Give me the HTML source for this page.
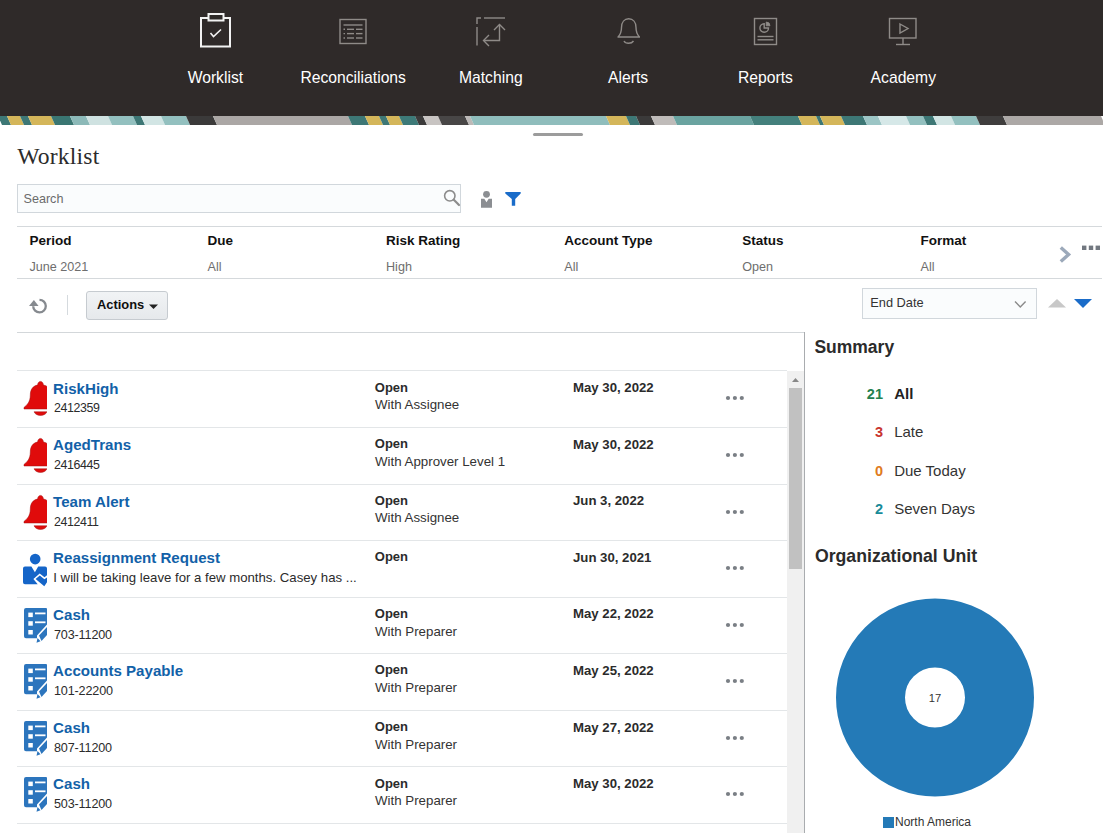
<!DOCTYPE html>
<html><head><meta charset="utf-8"><title>Worklist</title>
<style>
html,body{margin:0;padding:0;background:#ffffff;}
body{width:1110px;height:833px;position:relative;overflow:hidden;font-family:'Liberation Sans', sans-serif;}
</style></head><body>
<div style="position:absolute;left:0px;top:0px;width:1103px;height:116px;background:#2f2a29"></div><svg style="position:absolute;left:0;top:116px" width="1103" height="9" viewBox="0 116 1103 9"><polygon points="-2,116 7,116 11,125 2,125" fill="#3d7775"/><polygon points="7,116 20,116 24,125 11,125" fill="#d4b65a"/><polygon points="20,116 28,116 32,125 24,125" fill="#3d7775"/><polygon points="28,116 51,116 55,125 32,125" fill="#d4b65a"/><polygon points="51,116 70,116 74,125 55,125" fill="#3a7672"/><polygon points="70,116 86,116 90,125 74,125" fill="#8cb9b8"/><polygon points="86,116 108,116 112,125 90,125" fill="#cfe2e1"/><polygon points="108,116 133,116 137,125 112,125" fill="#93c0bf"/><polygon points="133,116 141,116 145,125 137,125" fill="#3d7775"/><polygon points="141,116 161,116 165,125 145,125" fill="#d2e5e4"/><polygon points="161,116 186,116 190,125 165,125" fill="#93c0bf"/><polygon points="186,116 213,116 217,125 190,125" fill="#3b3a3a"/><polygon points="213,116 348,116 352,125 217,125" fill="#aba7a5"/><polygon points="348,116 365,116 369,125 352,125" fill="#3d7775"/><polygon points="365,116 379,116 383,125 369,125" fill="#d4b65a"/><polygon points="379,116 386,116 390,125 383,125" fill="#3d7775"/><polygon points="386,116 399,116 403,125 390,125" fill="#d4b65a"/><polygon points="399,116 415,116 419,125 403,125" fill="#3d7a78"/><polygon points="415,116 423,116 427,125 419,125" fill="#3b3a3a"/><polygon points="423,116 438,116 442,125 427,125" fill="#c8c4c2"/><polygon points="438,116 465,116 469,125 442,125" fill="#484646"/><polygon points="465,116 470,116 474,125 469,125" fill="#bdb9b7"/><polygon points="470,116 606,116 610,125 474,125" fill="#8fbdbc"/><polygon points="606,116 626,116 630,125 610,125" fill="#d4b65a"/><polygon points="626,116 636,116 640,125 630,125" fill="#3d7775"/><polygon points="636,116 651,116 655,125 640,125" fill="#3b3a3a"/><polygon points="651,116 673,116 677,125 655,125" fill="#bfbbb9"/><polygon points="673,116 750,116 754,125 677,125" fill="#6aa3a0"/><polygon points="750,116 798,116 802,125 754,125" fill="#44807c"/><polygon points="798,116 816,116 820,125 802,125" fill="#d4b65a"/><polygon points="816,116 820,116 824,125 820,125" fill="#3d7775"/><polygon points="820,116 841,116 845,125 824,125" fill="#d4b65a"/><polygon points="841,116 863,116 867,125 845,125" fill="#3d7775"/><polygon points="863,116 878,116 882,125 867,125" fill="#9cc5c5"/><polygon points="878,116 906,116 910,125 882,125" fill="#d6e8e8"/><polygon points="906,116 923,116 927,125 910,125" fill="#93c0bf"/><polygon points="923,116 933,116 937,125 927,125" fill="#3d7775"/><polygon points="933,116 951,116 955,125 937,125" fill="#d2e5e4"/><polygon points="951,116 976,116 980,125 955,125" fill="#93c0bf"/><polygon points="976,116 1003,116 1007,125 980,125" fill="#3f3d3d"/><polygon points="1003,116 1101,116 1105,125 1007,125" fill="#aca8a6"/></svg><div style="position:absolute;left:533px;top:133px;width:50px;height:3px;background:#9c9c9c;border-radius:2px"></div>
<svg style="position:absolute;left:0;top:0" width="1103" height="116">
 <g fill="none" stroke="#f2f2f2" stroke-width="2">
  <rect x="201" y="18" width="29" height="28.5"/>
  <rect x="208.5" y="14" width="15" height="6.5" fill="#2e2a28"/>
  <polyline points="210.5,33 213.5,36.5 221,29.5" stroke-width="1.6"/>
 </g>
 <g fill="none" stroke="#8f8b88" stroke-width="1.4">
  <rect x="340" y="19.5" width="26" height="24"/>
  <line x1="343.5" y1="25" x2="362.5" y2="25"/>
  <line x1="343.5" y1="29.3" x2="345" y2="29.3"/><line x1="347" y1="29.3" x2="354" y2="29.3"/><line x1="356" y1="29.3" x2="362.5" y2="29.3"/>
  <line x1="343.5" y1="33.6" x2="345" y2="33.6"/><line x1="347" y1="33.6" x2="354" y2="33.6"/><line x1="356" y1="33.6" x2="362.5" y2="33.6"/>
  <line x1="343.5" y1="38" x2="345" y2="38"/><line x1="347" y1="38" x2="354" y2="38"/><line x1="356" y1="38" x2="362.5" y2="38"/>
 </g>
 <g fill="none" stroke="#8f8b88" stroke-width="1.4">
  <polyline points="477,24 477,18 481,18"/>
  <line x1="484" y1="18" x2="505" y2="18"/>
  <line x1="477" y1="27" x2="477" y2="45.5"/>
  <polyline points="499.5,24.5 499.5,40.5 484,40.5"/>
  <polyline points="494,30 499.5,24.5 505,30"/>
  <polyline points="489,35 483.5,40.5 489,46"/>
 </g>
 <g fill="none" stroke="#8f8b88" stroke-width="1.4">
  <path d="M617.5,37 L640,37 M618,37 C621,34 621.5,31 621.5,27.5 C621.5,22 624.5,18.8 628.7,18.8 C633,18.8 636,22 636,27.5 C636,31 636.5,34 639.5,37"/>
  <path d="M624,41 C625.5,44 631.5,44 633.5,41"/>
 </g>
 <g fill="none" stroke="#8f8b88" stroke-width="1.4">
  <rect x="754.5" y="18.5" width="22" height="26"/>
  <path d="M768.5,28 A4.3,4.3 0 1 1 764.2,23.7 L764.2,28 Z"/>
  <path d="M766.2,22 L766.2,25.8 L770,25.8 A3.8,3.8 0 0 0 766.2,22 Z" fill="#8f8b88" stroke-width="0.8"/>
  <line x1="757.5" y1="36.5" x2="773.5" y2="36.5"/>
  <line x1="757.5" y1="39.8" x2="773.5" y2="39.8"/>
 </g>
 <g fill="none" stroke="#8f8b88" stroke-width="1.4">
  <rect x="889.5" y="18.5" width="26.5" height="19.5"/>
  <line x1="903" y1="38" x2="903" y2="44"/>
  <line x1="896" y1="44.5" x2="910" y2="44.5"/>
  <polygon points="900,24 908,28.5 900,33"/>
 </g>
</svg><div style="position:absolute;left:15.40px;width:400px;text-align:center;top:70.00px;font:400 15.7px/1 'Liberation Sans', sans-serif;color:#ffffff;white-space:nowrap;">Worklist</div><div style="position:absolute;left:153.20px;width:400px;text-align:center;top:70.00px;font:400 15.7px/1 'Liberation Sans', sans-serif;color:#ffffff;white-space:nowrap;">Reconciliations</div><div style="position:absolute;left:290.80px;width:400px;text-align:center;top:70.00px;font:400 15.7px/1 'Liberation Sans', sans-serif;color:#ffffff;white-space:nowrap;">Matching</div><div style="position:absolute;left:428.10px;width:400px;text-align:center;top:70.00px;font:400 15.7px/1 'Liberation Sans', sans-serif;color:#ffffff;white-space:nowrap;">Alerts</div><div style="position:absolute;left:565.50px;width:400px;text-align:center;top:70.00px;font:400 15.7px/1 'Liberation Sans', sans-serif;color:#ffffff;white-space:nowrap;">Reports</div><div style="position:absolute;left:703.30px;width:400px;text-align:center;top:70.00px;font:400 15.7px/1 'Liberation Sans', sans-serif;color:#ffffff;white-space:nowrap;">Academy</div><div style="position:absolute;left:17.20px;top:145.00px;font:400 23.6px/1 'Liberation Serif', serif;color:#2b2b2b;white-space:nowrap;letter-spacing:0.2px">Worklist</div><div style="position:absolute;left:17px;top:184px;width:442px;height:27px;border:1px solid #d1d7dc;background:#fafcfd"></div><div style="position:absolute;left:23.50px;top:193.00px;font:400 12.6px/1 'Liberation Sans', sans-serif;color:#6b6b6b;white-space:nowrap;">Search</div><svg style="position:absolute;left:440px;top:186px" width="24" height="24">
 <circle cx="9.8" cy="9.8" r="5.2" fill="none" stroke="#8c8c8c" stroke-width="1.6"/>
 <line x1="13.8" y1="13.8" x2="19" y2="19" stroke="#8c8c8c" stroke-width="2.2" stroke-linecap="round"/>
</svg><svg style="position:absolute;left:478px;top:188px" width="50" height="24">
 <circle cx="8.5" cy="6.3" r="3.4" fill="#8b8e92"/>
 <path d="M3,10.8 L6.3,10.8 L8.5,14.3 L10.7,10.8 L14,10.8 L14,19.8 L3,19.8 Z" fill="#8b8e92"/>
 <path d="M27.3,4 L42.7,4 L42.7,5.5 L37.2,11 L37.2,17.7 L33.8,17.7 L33.8,11 L27.3,5.5 Z" fill="#1a6cc9"/>
</svg><div style="position:absolute;left:17px;top:226px;width:1085px;height:0px;border-top:1px solid #d5d9dc"></div><div style="position:absolute;left:17px;top:278px;width:1085px;height:0px;border-top:1px solid #d5d9dc"></div><div style="position:absolute;left:29.50px;top:234.00px;font:700 13.5px/1 'Liberation Sans', sans-serif;color:#111111;white-space:nowrap;">Period</div><div style="position:absolute;left:29.50px;top:261.00px;font:400 12.6px/1 'Liberation Sans', sans-serif;color:#6e6e6e;white-space:nowrap;">June 2021</div><div style="position:absolute;left:207.60px;top:234.00px;font:700 13.5px/1 'Liberation Sans', sans-serif;color:#111111;white-space:nowrap;">Due</div><div style="position:absolute;left:207.60px;top:261.00px;font:400 12.6px/1 'Liberation Sans', sans-serif;color:#6e6e6e;white-space:nowrap;">All</div><div style="position:absolute;left:386.00px;top:234.00px;font:700 13.5px/1 'Liberation Sans', sans-serif;color:#111111;white-space:nowrap;">Risk Rating</div><div style="position:absolute;left:386.00px;top:261.00px;font:400 12.6px/1 'Liberation Sans', sans-serif;color:#6e6e6e;white-space:nowrap;">High</div><div style="position:absolute;left:564.30px;top:234.00px;font:700 13.5px/1 'Liberation Sans', sans-serif;color:#111111;white-space:nowrap;">Account Type</div><div style="position:absolute;left:564.30px;top:261.00px;font:400 12.6px/1 'Liberation Sans', sans-serif;color:#6e6e6e;white-space:nowrap;">All</div><div style="position:absolute;left:742.20px;top:234.00px;font:700 13.5px/1 'Liberation Sans', sans-serif;color:#111111;white-space:nowrap;">Status</div><div style="position:absolute;left:742.20px;top:261.00px;font:400 12.6px/1 'Liberation Sans', sans-serif;color:#6e6e6e;white-space:nowrap;">Open</div><div style="position:absolute;left:920.50px;top:234.00px;font:700 13.5px/1 'Liberation Sans', sans-serif;color:#111111;white-space:nowrap;">Format</div><div style="position:absolute;left:920.50px;top:261.00px;font:400 12.6px/1 'Liberation Sans', sans-serif;color:#6e6e6e;white-space:nowrap;">All</div><svg style="position:absolute;left:1050px;top:240px" width="60" height="30">
 <polyline points="10.8,7.4 18.6,14.5 10.8,21.6" fill="none" stroke="#9ca9ba" stroke-width="3.4"/>
 <rect x="32" y="5.6" width="4.4" height="4.4" fill="#727880"/>
 <rect x="38.8" y="5.6" width="4.4" height="4.4" fill="#727880"/>
 <rect x="45.6" y="5.6" width="4.4" height="4.4" fill="#727880"/>
</svg><svg style="position:absolute;left:26px;top:295px" width="24" height="24">
 <path d="M13.5,4.8 A6.3,6.3 0 1 1 7.2,11.2" fill="none" stroke="#868a8f" stroke-width="2.3"/>
 <polygon points="7.9,5 3,10.9 12.6,10.9" fill="#868a8f"/>
</svg><div style="position:absolute;left:66.5px;top:295px;width:1px;height:20px;background:#d5dade"></div><div style="position:absolute;left:86px;top:291px;width:80px;height:27px;border:1px solid #c6cbd0;border-radius:3px;background:linear-gradient(#f1f3f5,#e6e9ec)"></div><div style="position:absolute;left:97.00px;top:299.00px;font:700 12.9px/1 'Liberation Sans', sans-serif;color:#0f0f0f;white-space:nowrap;">Actions</div><svg style="position:absolute;left:148px;top:303px" width="12" height="8"><polygon points="1,1.5 10,1.5 5.5,6" fill="#222"/></svg><div style="position:absolute;left:862px;top:288px;width:173px;height:29px;border:1px solid #d1d7dc;background:#fafcfd"></div><div style="position:absolute;left:870.30px;top:297.00px;font:400 12.8px/1 'Liberation Sans', sans-serif;color:#333333;white-space:nowrap;">End Date</div><svg style="position:absolute;left:1012px;top:298px" width="16" height="12"><polyline points="3,3.5 8.3,9 13.6,3.5" fill="none" stroke="#8a8a8a" stroke-width="1.4"/></svg><svg style="position:absolute;left:1045px;top:296px" width="50" height="14">
 <polygon points="3,11.5 12,3 21,11.5" fill="#c8c8c8"/>
 <polygon points="29,3 47,3 38,12" fill="#1a6cc9"/>
</svg><div style="position:absolute;left:17px;top:332px;width:787px;height:0px;border-top:1px solid #d3d7da"></div><div style="position:absolute;left:804px;top:332px;width:1px;height:501px;background:#a9acaf"></div><div style="position:absolute;left:787px;top:371px;width:17px;height:462px;background:#f0f0f0"></div><svg style="position:absolute;left:787px;top:371px" width="17" height="14"><polygon points="5,11 8.5,7 12,11" fill="#888"/></svg><div style="position:absolute;left:789px;top:388px;width:13px;height:181px;background:#c1c1c1"></div><div style="position:absolute;left:17px;top:370px;width:770px;height:0px;border-top:1px solid #e3e6e8"></div><div style="position:absolute;left:17px;top:427px;width:770px;height:0px;border-top:1px solid #e3e6e8"></div><div style="position:absolute;left:17px;top:484px;width:770px;height:0px;border-top:1px solid #e3e6e8"></div><div style="position:absolute;left:17px;top:540px;width:770px;height:0px;border-top:1px solid #e3e6e8"></div><div style="position:absolute;left:17px;top:597px;width:770px;height:0px;border-top:1px solid #e3e6e8"></div><div style="position:absolute;left:17px;top:653px;width:770px;height:0px;border-top:1px solid #e3e6e8"></div><div style="position:absolute;left:17px;top:710px;width:770px;height:0px;border-top:1px solid #e3e6e8"></div><div style="position:absolute;left:17px;top:766px;width:770px;height:0px;border-top:1px solid #e3e6e8"></div><div style="position:absolute;left:17px;top:823px;width:770px;height:0px;border-top:1px solid #e3e6e8"></div><svg style="position:absolute;left:18px;top:378.4px;overflow:hidden" width="29" height="40" viewBox="0 0 29 40">
 <g fill="#e00b0b" stroke="#a01010" stroke-width="0.5">
  <path d="M6,29.4 C9,27 12.3,24 12.3,17 C12.3,11 15.5,7.6 19.6,7.1 C19.6,4.9 21,3.4 22.5,3.4 C24,3.4 25.4,4.9 25.4,7.1 C29.5,7.6 32.7,11 32.7,17 C32.7,24 36,27 39,29.4 L39,31 L6,31 Z"/>
  <path d="M16,33.8 L29,33.8 C28,36.2 25.5,37.4 22.5,37.4 C19.5,37.4 17,36.2 16,33.8 Z"/>
 </g>
</svg><div style="position:absolute;left:53.10px;top:381.00px;font:700 15.1px/1 'Liberation Sans', sans-serif;color:#1261a8;white-space:nowrap;">RiskHigh</div><div style="position:absolute;left:54.00px;top:402.00px;font:400 12.4px/1 'Liberation Sans', sans-serif;color:#2b2b2b;white-space:nowrap;letter-spacing:-0.4px">2412359</div><div style="position:absolute;left:374.80px;top:381.00px;font:700 13px/1 'Liberation Sans', sans-serif;color:#2b2b2b;white-space:nowrap;">Open</div><div style="position:absolute;left:375.00px;top:398.00px;font:400 13.3px/1 'Liberation Sans', sans-serif;color:#333333;white-space:nowrap;">With Assignee</div><div style="position:absolute;left:573.00px;top:381.00px;font:700 13.2px/1 'Liberation Sans', sans-serif;color:#2b2b2b;white-space:nowrap;">May 30, 2022</div><svg style="position:absolute;left:724px;top:394.4px" width="24" height="8">
 <circle cx="4" cy="4" r="2.1" fill="#7a7f85"/><circle cx="10.9" cy="4" r="2.1" fill="#7a7f85"/><circle cx="17.8" cy="4" r="2.1" fill="#7a7f85"/>
</svg><svg style="position:absolute;left:18px;top:435.0px;overflow:hidden" width="29" height="40" viewBox="0 0 29 40">
 <g fill="#e00b0b" stroke="#a01010" stroke-width="0.5">
  <path d="M6,29.4 C9,27 12.3,24 12.3,17 C12.3,11 15.5,7.6 19.6,7.1 C19.6,4.9 21,3.4 22.5,3.4 C24,3.4 25.4,4.9 25.4,7.1 C29.5,7.6 32.7,11 32.7,17 C32.7,24 36,27 39,29.4 L39,31 L6,31 Z"/>
  <path d="M16,33.8 L29,33.8 C28,36.2 25.5,37.4 22.5,37.4 C19.5,37.4 17,36.2 16,33.8 Z"/>
 </g>
</svg><div style="position:absolute;left:53.10px;top:437.00px;font:700 15.1px/1 'Liberation Sans', sans-serif;color:#1261a8;white-space:nowrap;">AgedTrans</div><div style="position:absolute;left:54.00px;top:459.00px;font:400 12.4px/1 'Liberation Sans', sans-serif;color:#2b2b2b;white-space:nowrap;letter-spacing:-0.4px">2416445</div><div style="position:absolute;left:374.80px;top:437.00px;font:700 13px/1 'Liberation Sans', sans-serif;color:#2b2b2b;white-space:nowrap;">Open</div><div style="position:absolute;left:375.00px;top:455.00px;font:400 13.3px/1 'Liberation Sans', sans-serif;color:#333333;white-space:nowrap;">With Approver Level 1</div><div style="position:absolute;left:573.00px;top:438.00px;font:700 13.2px/1 'Liberation Sans', sans-serif;color:#2b2b2b;white-space:nowrap;">May 30, 2022</div><svg style="position:absolute;left:724px;top:451.0px" width="24" height="8">
 <circle cx="4" cy="4" r="2.1" fill="#7a7f85"/><circle cx="10.9" cy="4" r="2.1" fill="#7a7f85"/><circle cx="17.8" cy="4" r="2.1" fill="#7a7f85"/>
</svg><svg style="position:absolute;left:18px;top:491.5px;overflow:hidden" width="29" height="40" viewBox="0 0 29 40">
 <g fill="#e00b0b" stroke="#a01010" stroke-width="0.5">
  <path d="M6,29.4 C9,27 12.3,24 12.3,17 C12.3,11 15.5,7.6 19.6,7.1 C19.6,4.9 21,3.4 22.5,3.4 C24,3.4 25.4,4.9 25.4,7.1 C29.5,7.6 32.7,11 32.7,17 C32.7,24 36,27 39,29.4 L39,31 L6,31 Z"/>
  <path d="M16,33.8 L29,33.8 C28,36.2 25.5,37.4 22.5,37.4 C19.5,37.4 17,36.2 16,33.8 Z"/>
 </g>
</svg><div style="position:absolute;left:53.10px;top:494.00px;font:700 15.1px/1 'Liberation Sans', sans-serif;color:#1261a8;white-space:nowrap;">Team Alert</div><div style="position:absolute;left:54.00px;top:516.00px;font:400 12.4px/1 'Liberation Sans', sans-serif;color:#2b2b2b;white-space:nowrap;letter-spacing:-0.4px">2412411</div><div style="position:absolute;left:374.80px;top:494.00px;font:700 13px/1 'Liberation Sans', sans-serif;color:#2b2b2b;white-space:nowrap;">Open</div><div style="position:absolute;left:375.00px;top:511.00px;font:400 13.3px/1 'Liberation Sans', sans-serif;color:#333333;white-space:nowrap;">With Assignee</div><div style="position:absolute;left:573.00px;top:494.00px;font:700 13.2px/1 'Liberation Sans', sans-serif;color:#2b2b2b;white-space:nowrap;">Jun 3, 2022</div><svg style="position:absolute;left:724px;top:507.5px" width="24" height="8">
 <circle cx="4" cy="4" r="2.1" fill="#7a7f85"/><circle cx="10.9" cy="4" r="2.1" fill="#7a7f85"/><circle cx="17.8" cy="4" r="2.1" fill="#7a7f85"/>
</svg><svg style="position:absolute;left:18px;top:546.6px" width="34" height="42" viewBox="0 0 34 42">
 <g fill="#1565c8">
  <circle cx="17.2" cy="12.1" r="5.3"/>
  <path d="M5,21.6 Q5,19.6 7,19.6 L13.4,19.6 L16.9,25.3 L20.2,19.6 L27,19.6 Q29,19.6 29,21.6 L29,28.3 L26.5,30.3 L21.7,26.6 L15.4,31.9 L19.7,37.2 L7,37.2 Q5,37.2 5,35.2 Z"/>
  <path d="M17.6,31.9 L21.8,28.6 L26.4,32.3 L29,30.4 L29,35.3 L26.3,39.2 Z"/>
 </g>
</svg><div style="position:absolute;left:53.10px;top:550.00px;font:700 15.1px/1 'Liberation Sans', sans-serif;color:#1261a8;white-space:nowrap;">Reassignment Request</div><div style="position:absolute;left:53.30px;top:571.00px;font:400 13.2px/1 'Liberation Sans', sans-serif;color:#2b2b2b;white-space:nowrap;">I will be taking leave for a few months. Casey has ...</div><div style="position:absolute;left:374.80px;top:550.00px;font:700 13px/1 'Liberation Sans', sans-serif;color:#2b2b2b;white-space:nowrap;">Open</div><div style="position:absolute;left:573.00px;top:551.00px;font:700 13.2px/1 'Liberation Sans', sans-serif;color:#2b2b2b;white-space:nowrap;">Jun 30, 2021</div><svg style="position:absolute;left:724px;top:564.1px" width="24" height="8">
 <circle cx="4" cy="4" r="2.1" fill="#7a7f85"/><circle cx="10.9" cy="4" r="2.1" fill="#7a7f85"/><circle cx="17.8" cy="4" r="2.1" fill="#7a7f85"/>
</svg><svg style="position:absolute;left:18px;top:604.7px" width="34" height="40" viewBox="0 0 34 40">
 <path d="M8,3 L28,3 Q29,3 29,4 L29,19.5 L19,30.5 L19,33.2 L8,33.2 Q6,33.2 6,31.2 L6,5 Q6,3 8,3 Z" fill="#2c75bd"/>
 <g fill="#ffffff">
  <rect x="10.3" y="7.6" width="4.5" height="4.5"/><rect x="10.3" y="16.2" width="4.5" height="4.5"/><rect x="10.3" y="25" width="4.5" height="4.5"/>
  <rect x="17" y="7.5" width="10.5" height="1.8"/><rect x="17" y="16.4" width="10.5" height="1.8"/>
 </g>
 <path d="M21,30.5 L29,22 L29,30 L23.5,36 Z" fill="#2c75bd"/>
 <path d="M19.5,33 L22.5,36.3 L18.5,37.8 Z" fill="#2c75bd"/>
</svg><div style="position:absolute;left:53.10px;top:607.00px;font:700 15.1px/1 'Liberation Sans', sans-serif;color:#1261a8;white-space:nowrap;">Cash</div><div style="position:absolute;left:54.00px;top:629.00px;font:400 12.6px/1 'Liberation Sans', sans-serif;color:#2b2b2b;white-space:nowrap;letter-spacing:-0.15px">703-11200</div><div style="position:absolute;left:374.80px;top:607.00px;font:700 13px/1 'Liberation Sans', sans-serif;color:#2b2b2b;white-space:nowrap;">Open</div><div style="position:absolute;left:375.00px;top:625.00px;font:400 13.3px/1 'Liberation Sans', sans-serif;color:#333333;white-space:nowrap;">With Preparer</div><div style="position:absolute;left:573.00px;top:607.00px;font:700 13.2px/1 'Liberation Sans', sans-serif;color:#2b2b2b;white-space:nowrap;">May 22, 2022</div><svg style="position:absolute;left:724px;top:620.7px" width="24" height="8">
 <circle cx="4" cy="4" r="2.1" fill="#7a7f85"/><circle cx="10.9" cy="4" r="2.1" fill="#7a7f85"/><circle cx="17.8" cy="4" r="2.1" fill="#7a7f85"/>
</svg><svg style="position:absolute;left:18px;top:661.2px" width="34" height="40" viewBox="0 0 34 40">
 <path d="M8,3 L28,3 Q29,3 29,4 L29,19.5 L19,30.5 L19,33.2 L8,33.2 Q6,33.2 6,31.2 L6,5 Q6,3 8,3 Z" fill="#2c75bd"/>
 <g fill="#ffffff">
  <rect x="10.3" y="7.6" width="4.5" height="4.5"/><rect x="10.3" y="16.2" width="4.5" height="4.5"/><rect x="10.3" y="25" width="4.5" height="4.5"/>
  <rect x="17" y="7.5" width="10.5" height="1.8"/><rect x="17" y="16.4" width="10.5" height="1.8"/>
 </g>
 <path d="M21,30.5 L29,22 L29,30 L23.5,36 Z" fill="#2c75bd"/>
 <path d="M19.5,33 L22.5,36.3 L18.5,37.8 Z" fill="#2c75bd"/>
</svg><div style="position:absolute;left:53.10px;top:663.00px;font:700 15.1px/1 'Liberation Sans', sans-serif;color:#1261a8;white-space:nowrap;">Accounts Payable</div><div style="position:absolute;left:54.00px;top:685.00px;font:400 12.6px/1 'Liberation Sans', sans-serif;color:#2b2b2b;white-space:nowrap;letter-spacing:-0.15px">101-22200</div><div style="position:absolute;left:374.80px;top:663.00px;font:700 13px/1 'Liberation Sans', sans-serif;color:#2b2b2b;white-space:nowrap;">Open</div><div style="position:absolute;left:375.00px;top:681.00px;font:400 13.3px/1 'Liberation Sans', sans-serif;color:#333333;white-space:nowrap;">With Preparer</div><div style="position:absolute;left:573.00px;top:664.00px;font:700 13.2px/1 'Liberation Sans', sans-serif;color:#2b2b2b;white-space:nowrap;">May 25, 2022</div><svg style="position:absolute;left:724px;top:677.2px" width="24" height="8">
 <circle cx="4" cy="4" r="2.1" fill="#7a7f85"/><circle cx="10.9" cy="4" r="2.1" fill="#7a7f85"/><circle cx="17.8" cy="4" r="2.1" fill="#7a7f85"/>
</svg><svg style="position:absolute;left:18px;top:717.8px" width="34" height="40" viewBox="0 0 34 40">
 <path d="M8,3 L28,3 Q29,3 29,4 L29,19.5 L19,30.5 L19,33.2 L8,33.2 Q6,33.2 6,31.2 L6,5 Q6,3 8,3 Z" fill="#2c75bd"/>
 <g fill="#ffffff">
  <rect x="10.3" y="7.6" width="4.5" height="4.5"/><rect x="10.3" y="16.2" width="4.5" height="4.5"/><rect x="10.3" y="25" width="4.5" height="4.5"/>
  <rect x="17" y="7.5" width="10.5" height="1.8"/><rect x="17" y="16.4" width="10.5" height="1.8"/>
 </g>
 <path d="M21,30.5 L29,22 L29,30 L23.5,36 Z" fill="#2c75bd"/>
 <path d="M19.5,33 L22.5,36.3 L18.5,37.8 Z" fill="#2c75bd"/>
</svg><div style="position:absolute;left:53.10px;top:720.00px;font:700 15.1px/1 'Liberation Sans', sans-serif;color:#1261a8;white-space:nowrap;">Cash</div><div style="position:absolute;left:54.00px;top:742.00px;font:400 12.6px/1 'Liberation Sans', sans-serif;color:#2b2b2b;white-space:nowrap;letter-spacing:-0.15px">807-11200</div><div style="position:absolute;left:374.80px;top:720.00px;font:700 13px/1 'Liberation Sans', sans-serif;color:#2b2b2b;white-space:nowrap;">Open</div><div style="position:absolute;left:375.00px;top:738.00px;font:400 13.3px/1 'Liberation Sans', sans-serif;color:#333333;white-space:nowrap;">With Preparer</div><div style="position:absolute;left:573.00px;top:721.00px;font:700 13.2px/1 'Liberation Sans', sans-serif;color:#2b2b2b;white-space:nowrap;">May 27, 2022</div><svg style="position:absolute;left:724px;top:733.8px" width="24" height="8">
 <circle cx="4" cy="4" r="2.1" fill="#7a7f85"/><circle cx="10.9" cy="4" r="2.1" fill="#7a7f85"/><circle cx="17.8" cy="4" r="2.1" fill="#7a7f85"/>
</svg><svg style="position:absolute;left:18px;top:774.4px" width="34" height="40" viewBox="0 0 34 40">
 <path d="M8,3 L28,3 Q29,3 29,4 L29,19.5 L19,30.5 L19,33.2 L8,33.2 Q6,33.2 6,31.2 L6,5 Q6,3 8,3 Z" fill="#2c75bd"/>
 <g fill="#ffffff">
  <rect x="10.3" y="7.6" width="4.5" height="4.5"/><rect x="10.3" y="16.2" width="4.5" height="4.5"/><rect x="10.3" y="25" width="4.5" height="4.5"/>
  <rect x="17" y="7.5" width="10.5" height="1.8"/><rect x="17" y="16.4" width="10.5" height="1.8"/>
 </g>
 <path d="M21,30.5 L29,22 L29,30 L23.5,36 Z" fill="#2c75bd"/>
 <path d="M19.5,33 L22.5,36.3 L18.5,37.8 Z" fill="#2c75bd"/>
</svg><div style="position:absolute;left:53.10px;top:776.00px;font:700 15.1px/1 'Liberation Sans', sans-serif;color:#1261a8;white-space:nowrap;">Cash</div><div style="position:absolute;left:54.00px;top:798.00px;font:400 12.6px/1 'Liberation Sans', sans-serif;color:#2b2b2b;white-space:nowrap;letter-spacing:-0.15px">503-11200</div><div style="position:absolute;left:374.80px;top:777.00px;font:700 13px/1 'Liberation Sans', sans-serif;color:#2b2b2b;white-space:nowrap;">Open</div><div style="position:absolute;left:375.00px;top:794.00px;font:400 13.3px/1 'Liberation Sans', sans-serif;color:#333333;white-space:nowrap;">With Preparer</div><div style="position:absolute;left:573.00px;top:777.00px;font:700 13.2px/1 'Liberation Sans', sans-serif;color:#2b2b2b;white-space:nowrap;">May 30, 2022</div><svg style="position:absolute;left:724px;top:790.4px" width="24" height="8">
 <circle cx="4" cy="4" r="2.1" fill="#7a7f85"/><circle cx="10.9" cy="4" r="2.1" fill="#7a7f85"/><circle cx="17.8" cy="4" r="2.1" fill="#7a7f85"/>
</svg><div style="position:absolute;left:814.40px;top:339.00px;font:700 17.5px/1 'Liberation Sans', sans-serif;color:#2b2b2b;white-space:nowrap;">Summary</div><div style="position:absolute;left:483.00px;width:400px;text-align:right;top:387.00px;font:700 14.5px/1 'Liberation Sans', sans-serif;color:#24814f;white-space:nowrap;">21</div><div style="position:absolute;left:894.20px;top:386.00px;font:700 15px/1 'Liberation Sans', sans-serif;color:#222;white-space:nowrap;">All</div><div style="position:absolute;left:483.00px;width:400px;text-align:right;top:425.00px;font:700 14.5px/1 'Liberation Sans', sans-serif;color:#c8342f;white-space:nowrap;">3</div><div style="position:absolute;left:894.20px;top:424.00px;font:400 15px/1 'Liberation Sans', sans-serif;color:#333;white-space:nowrap;">Late</div><div style="position:absolute;left:483.00px;width:400px;text-align:right;top:464.00px;font:700 14.5px/1 'Liberation Sans', sans-serif;color:#e07b20;white-space:nowrap;">0</div><div style="position:absolute;left:894.20px;top:463.00px;font:400 15px/1 'Liberation Sans', sans-serif;color:#333;white-space:nowrap;">Due Today</div><div style="position:absolute;left:483.00px;width:400px;text-align:right;top:502.00px;font:700 14.5px/1 'Liberation Sans', sans-serif;color:#198b99;white-space:nowrap;">2</div><div style="position:absolute;left:894.20px;top:501.00px;font:400 15px/1 'Liberation Sans', sans-serif;color:#333;white-space:nowrap;">Seven Days</div><div style="position:absolute;left:814.90px;top:548.00px;font:700 17.7px/1 'Liberation Sans', sans-serif;color:#2b2b2b;white-space:nowrap;">Organizational Unit</div><svg style="position:absolute;left:830px;top:592px" width="210" height="210">
 <circle cx="105" cy="105.5" r="64.5" fill="none" stroke="#247ab7" stroke-width="69"/>
</svg><div style="position:absolute;left:735.00px;width:400px;text-align:center;top:693.00px;font:400 11.2px/1 'Liberation Sans', sans-serif;color:#333;white-space:nowrap;">17</div><div style="position:absolute;left:883.4px;top:817px;width:10.2px;height:10.8px;background:#247ab7"></div><div style="position:absolute;left:895.00px;top:816.00px;font:400 12px/1 'Liberation Sans', sans-serif;color:#333333;white-space:nowrap;">North America</div>
</body></html>
